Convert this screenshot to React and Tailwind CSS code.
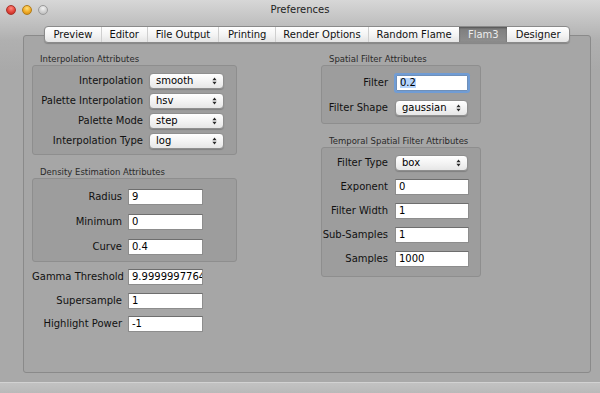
import React from "react";

const tabs = [
  { name: "Preview", w: "w-[56px]" },
  { name: "Editor", w: "w-[46px]" },
  { name: "File Output", w: "w-[72px]" },
  { name: "Printing", w: "w-[57px]" },
  { name: "Render Options", w: "w-[93px]" },
  { name: "Random Flame", w: "w-[92px]" },
  { name: "Flam3", w: "w-[48px]", active: true },
  { name: "Designer", w: "w-[62px]" },
];

const Arrows = () => (
  <svg width="5" height="8" viewBox="0 0 5 8" className="mr-[6px] shrink-0">
    <path d="M2.5 0.6 L4.6 3.2 H0.4 Z M2.5 7.4 L4.6 4.8 H0.4 Z" fill="#2b2b2b" />
  </svg>
);

const PopUp = ({ value, w = "w-[75px]" }) => (
  <div
    className={`flex h-[16px] ${w} items-center justify-between rounded-[4px] border border-[#8f8f8f] bg-[linear-gradient(#ffffff,#f1f1f1_60%,#e6e6e6)] pl-[6px] text-[10px] leading-none text-black shadow-[0_1px_1px_rgba(0,0,0,0.18)]`}
  >
    <span>{value}</span>
    <Arrows />
  </div>
);

const Field = ({ value, w = "w-[75px]" }) => (
  <div
    className={`flex h-[16px] ${w} items-center overflow-hidden whitespace-nowrap border border-[#8d8d8d] border-t-[#6e6e6e] bg-white pl-[3px] text-[10px] leading-none text-black`}
  >
    {value}
  </div>
);

const Row = ({ label, lw, gap = "mr-[6px]", children }) => (
  <div className="flex items-center">
    <span className={`${lw} ${gap} shrink-0 whitespace-nowrap text-right text-[10px] leading-none text-[#111]`}>
      {label}
    </span>
    {children}
  </div>
);

const GroupTitle = ({ children, mt = "" }) => (
  <div className={`${mt} h-[11px] pl-[8px] text-[8.5px] leading-[11px] text-[#2a2a2a] whitespace-nowrap`}>
    {children}
  </div>
);

const Box = ({ className, children }) => (
  <div className={`flex flex-col rounded-[3px] border border-[#8e8e8e] bg-[#9d9d9d] ${className}`}>
    {children}
  </div>
);

export default function App() {
  return (
    <div className="flex h-[393px] w-[600px] flex-col bg-[linear-gradient(180deg,#d7d7d7_0px,#c3c3c3_20px,#b0b0b0_40px,#a9a9a9_70px,#a9a9a9_100%)] font-['DejaVu_Sans',sans-serif]">
      {/* title bar */}
      <div className="relative flex h-[19px] shrink-0 items-center">
        <div className="flex gap-[6px] pl-[6px]">
          <span className="h-[10px] w-[10px] rounded-full border border-[#a8322a] bg-[radial-gradient(circle_at_50%_30%,#ff8a80,#e2443a_55%,#b9261e)]" />
          <span className="h-[10px] w-[10px] rounded-full border border-[#b27c18] bg-[radial-gradient(circle_at_50%_30%,#ffe07a,#f0aa25_55%,#cc8410)]" />
          <span className="h-[10px] w-[10px] rounded-full border border-[#9a9a9a] bg-[radial-gradient(circle_at_50%_30%,#f2f2f2,#cfcfcf_55%,#b2b2b2)]" />
        </div>
        <div className="absolute inset-x-0 text-center text-[10px] leading-none text-[#222]">Preferences</div>
      </div>

      {/* body */}
      <div className="flex flex-col pl-[23px] pt-[7px]">
        {/* tab control */}
        <div className="relative z-10 ml-[21px] flex h-[17px] w-[526px] overflow-hidden rounded-[4px] border border-[#8a8a8a] bg-[linear-gradient(#ffffff,#f3f3f3_55%,#e4e4e4)] shadow-[0_1px_1px_rgba(0,0,0,0.2)]">
          {tabs.map((t, i) => (
            <div
              key={t.name}
              className={`flex ${t.w} items-center justify-center text-[10px] leading-none ${
                i > 0 && !t.active && !tabs[i - 1].active ? "border-l border-[#cfcfcf]" : ""
              } ${
                t.active
                  ? "bg-[linear-gradient(#7d7d7d,#8e8e8e)] text-[#ececec] shadow-[inset_0_1px_2px_rgba(0,0,0,0.35)]"
                  : "text-[#111]"
              }`}
            >
              {t.name}
            </div>
          ))}
        </div>

        {/* tab panel */}
        <div className="-mt-[8px] flex h-[338px] w-[568px] rounded-[3px] border border-[#8a8a8a] bg-[#a6a6a6] pl-[8px] pt-[18px]">
          {/* left column */}
          <div className="flex w-[205px] flex-col">
            <GroupTitle>Interpolation Attributes</GroupTitle>
            <Box className="gap-[4px] pb-[5px] pt-[7px]">
              <Row label="Interpolation" lw="w-[110px]">
                <PopUp value="smooth" />
              </Row>
              <Row label="Palette Interpolation" lw="w-[110px]">
                <PopUp value="hsv" />
              </Row>
              <Row label="Palette Mode" lw="w-[110px]">
                <PopUp value="step" />
              </Row>
              <Row label="Interpolation Type" lw="w-[110px]">
                <PopUp value="log" />
              </Row>
            </Box>

            <GroupTitle mt="mt-[12px]">Density Estimation Attributes</GroupTitle>
            <Box className="gap-[9px] pb-[6px] pt-[10px]">
              <Row label="Radius" lw="w-[89px]">
                <Field value="9" />
              </Row>
              <Row label="Minimum" lw="w-[89px]">
                <Field value="0" />
              </Row>
              <Row label="Curve" lw="w-[89px]">
                <Field value="0.4" />
              </Row>
            </Box>

            <div className="mt-[7px] flex flex-col gap-[7.5px]">
              <Row label="Gamma Threshold" lw="w-[90px]">
                <Field value="9.99999977648" />
              </Row>
              <Row label="Supersample" lw="w-[90px]">
                <Field value="1" />
              </Row>
              <Row label="Highlight Power" lw="w-[90px]">
                <Field value="-1" />
              </Row>
            </div>
          </div>

          {/* right column */}
          <div className="ml-[84px] flex w-[160px] flex-col">
            <GroupTitle>Spatial Filter Attributes</GroupTitle>
            <Box className="gap-[9px] pb-[7px] pt-[9px]">
              <Row label="Filter" lw="w-[66px]" gap="mr-[8px]">
                <div className="flex h-[16px] w-[72px] items-center rounded-[1px] border border-[#6f8fb8] bg-white pl-[3px] text-[10px] leading-none text-black shadow-[0_0_0_2px_rgba(104,156,222,0.85)]">
                  <span className="bg-[#b4d4fc]">0.2</span>
                </div>
              </Row>
              <Row label="Filter Shape" lw="w-[66px]" gap="mr-[7px]">
                <PopUp value="gaussian" w="w-[73px]" />
              </Row>
            </Box>

            <GroupTitle mt="mt-[12px]">Temporal Spatial Filter Attributes</GroupTitle>
            <Box className="gap-[8px] pb-[9px] pt-[7px]">
              <Row label="Filter Type" lw="w-[66px]" gap="mr-[7px]">
                <PopUp value="box" w="w-[73px]" />
              </Row>
              <Row label="Exponent" lw="w-[66px]" gap="mr-[7px]">
                <Field value="0" w="w-[74px]" />
              </Row>
              <Row label="Filter Width" lw="w-[66px]" gap="mr-[7px]">
                <Field value="1" w="w-[74px]" />
              </Row>
              <Row label="Sub-Samples" lw="w-[66px]" gap="mr-[7px]">
                <Field value="1" w="w-[74px]" />
              </Row>
              <Row label="Samples" lw="w-[66px]" gap="mr-[7px]">
                <Field value="1000" w="w-[74px]" />
              </Row>
            </Box>
          </div>
        </div>
      </div>

      {/* bottom bar */}
      <div className="mt-auto h-[11px] border-t border-[#d2d2d2] bg-[linear-gradient(#c2c2c2,#b9b9b9)]" />
    </div>
  );
}
